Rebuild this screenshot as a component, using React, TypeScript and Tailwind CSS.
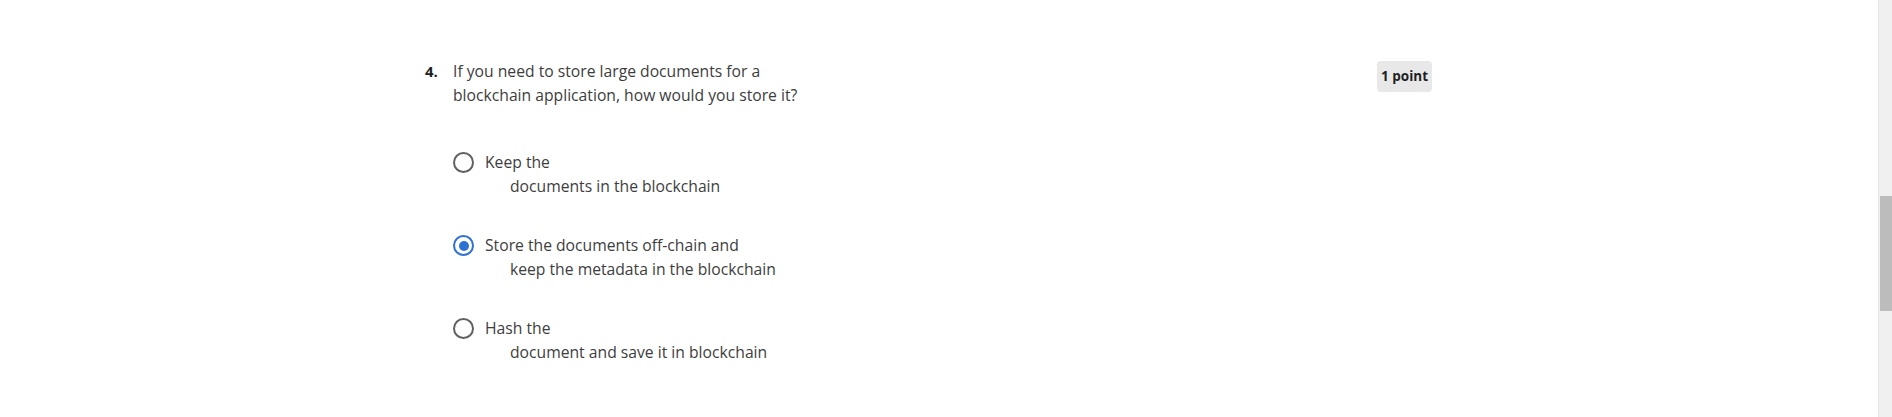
import { useState } from 'react';

const options = [
  { id: 'a', first: 'Keep the', rest: 'documents in the blockchain' },
  { id: 'b', first: 'Store the documents off-chain and', rest: 'keep the metadata in the blockchain' },
  { id: 'c', first: 'Hash the', rest: 'document and save it in blockchain' },
];

export default function App() {
  const [selected, setSelected] = useState('b');

  return (
    <div className="flex h-[417px] w-full overflow-hidden bg-white font-['Open_Sans','Liberation_Sans',sans-serif] text-[#3d3d3d]">
      <main className="flex-1">
        <div className="ml-[425px] w-[1007px] pt-[59px]">
          {/* Question header */}
          <div className="flex items-start justify-between">
            <div className="flex items-baseline">
              <span className="w-[28px] text-[15px] font-bold text-[#1f1f1f]">4.</span>
              <p className="text-[15.7px] leading-[24px]">
                If you need to store large documents for a
                <br />
                blockchain application, how would you store it?
              </p>
            </div>
            <span className="mt-[2px] rounded-[4px] bg-[#e8e8e8] px-[4px] py-[5px] text-[13.5px] font-bold leading-[21px] text-[#1f1f1f]">
              1 point
            </span>
          </div>

          {/* Answer options */}
          <div role="radiogroup" className="ml-[28px] mt-[43px] flex flex-col gap-[35px]">
            {options.map((opt) => {
              const checked = selected === opt.id;
              return (
                <label
                  key={opt.id}
                  className="flex cursor-pointer items-start"
                  onClick={() => setSelected(opt.id)}
                >
                  <span
                    className={`mt-[2px] flex h-[21px] w-[21px] shrink-0 items-center justify-center rounded-full border-[2.5px] ${
                      checked ? 'border-[#2d72d2]' : 'border-[#606060]'
                    }`}
                  >
                    {checked && <span className="h-[10px] w-[10px] rounded-full bg-[#2d72d2]" />}
                  </span>
                  <span className="ml-[11px] text-[15.7px] leading-[24px]">
                    <span className="block">{opt.first}</span>
                    <span className="block pl-[25px]">{opt.rest}</span>
                  </span>
                </label>
              );
            })}
          </div>
        </div>
      </main>

      {/* Page scrollbar */}
      <div className="w-[14px] shrink-0 border-l border-[#e6e6e6] bg-[#f0f0f0] pt-[196px]">
        <div className="ml-[1px] h-[115px] bg-[#bcbcbc]" />
      </div>
    </div>
  );
}
